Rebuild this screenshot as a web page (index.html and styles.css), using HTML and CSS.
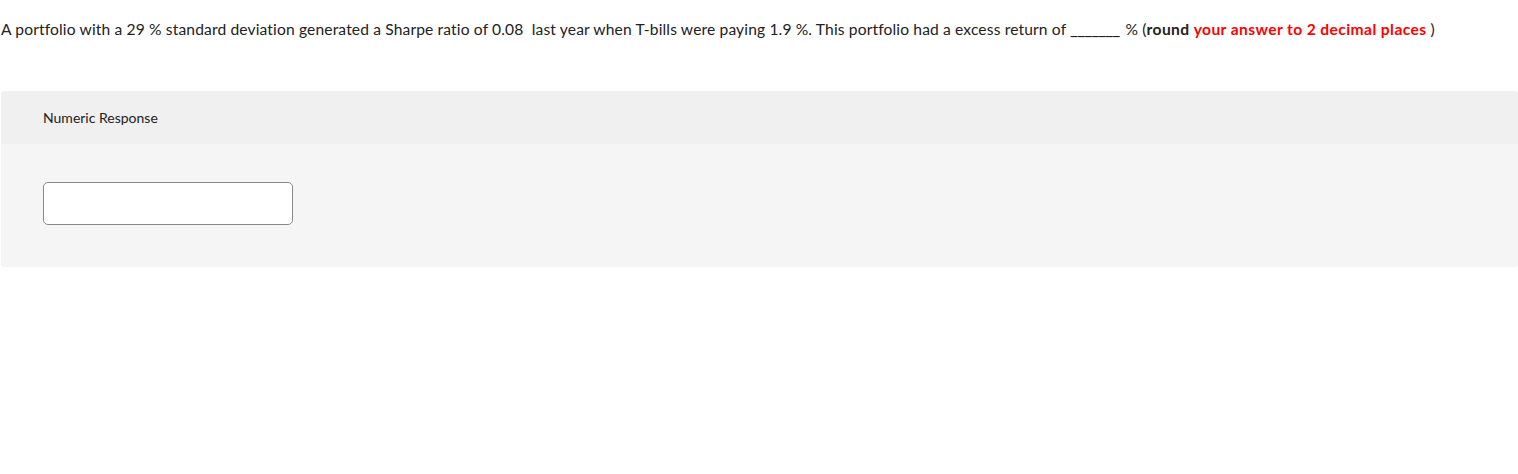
FILE: index.html
```html
<!DOCTYPE html>
<html>
<head>
<meta charset="utf-8">
<link rel="stylesheet" href="styles.css">
</head>
<body>
<div class="page">
  <p class="question">A portfolio with a 29 % standard deviation generated a Sharpe ratio of 0.08&nbsp; last year when T-bills were paying 1.9 %. This portfolio had a excess return of <span class="blank">_______</span> % (<b>round</b> <b class="red">your answer to 2 decimal places</b> )</p>
  <div class="panel">
    <div class="panel-head">Numeric Response</div>
    <div class="panel-body">
      <input class="answer" type="text">
    </div>
  </div>
</div>
</body>
</html>
```

FILE: styles.css
```css
html, body {
  margin: 0;
  padding: 0;
  background: #fff;
}
body {
  font-family: Lato, "Liberation Sans", Arial, sans-serif;
  color: #222;
}
.page {
  padding: 0 0 0 1px;
}
.question {
  margin: 0;
  padding-top: 19px;
  font-size: 15.6px;
  line-height: 20px;
  letter-spacing: 0.14px;
}
.question b {
  font-weight: 700;
  letter-spacing: 0.4px;
}
.blank {
  font-size: 17.5px;
  line-height: 10px;
  letter-spacing: -1px;
  margin-right: 2px;
}
.red {
  color: #ff0000;
}
.panel {
  margin-top: 52px;
  border-radius: 3px;
  overflow: hidden;
}
.panel-head {
  background: #f0f0f0;
  height: 53px;
  box-sizing: border-box;
  padding: 18px 0 0 42px;
  font-size: 14px;
  line-height: 17px;
  color: #222;
}
.panel-body {
  background: #f5f5f5;
  padding: 38px 0 42px 42px;
}
.answer {
  display: block;
  width: 250px;
  height: 43px;
  box-sizing: border-box;
  border: 1px solid #8a8a8a;
  border-radius: 5px;
  background: #fff;
  margin: 0;
  padding: 0 8px;
  font: inherit;
}
```
